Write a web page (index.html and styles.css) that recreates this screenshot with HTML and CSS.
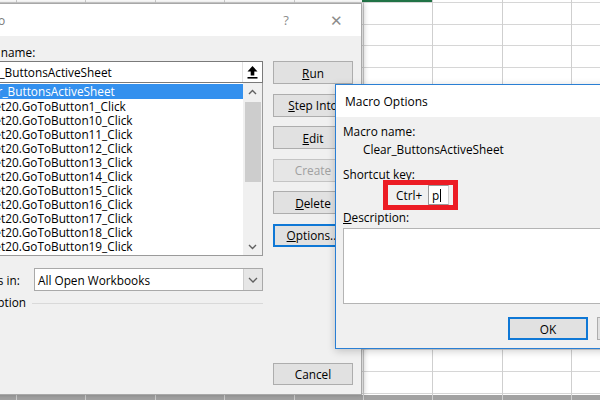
FILE: index.html
```html
<!DOCTYPE html>
<html>
<head>
<meta charset="utf-8">
<link rel="stylesheet" href="styles.css">
</head>
<body>
<div class="desktop">
  <div class="dlg macro">
    <div class="titlebar">
      <span class="title">Macro</span>
      <span class="cap help">?</span>
      <span class="cap close">&#x2715;</span>
    </div>
    <div class="mbody">
      <div class="leftcol">
        <div class="lbl"><u>M</u>acro name:</div>
        <div class="namebox">
          <span class="nametext">Clear_ButtonsActiveSheet</span>
          <span class="refbtn"><svg width="11" height="14" viewBox="0 0 11 14"><path d="M5.5 1 L10.5 6.5 H7.3 V10.5 H3.7 V6.5 H0.5 Z" fill="#000"/><rect x="0.5" y="12" width="10" height="1.6" fill="#000"/></svg></span>
        </div>
        <div class="list">
          <ul class="items">
            <li class="sel">Clear_ButtonsActiveSheet</li>
            <li>Sheet20.GoToButton1_Click</li>
            <li>Sheet20.GoToButton10_Click</li>
            <li>Sheet20.GoToButton11_Click</li>
            <li>Sheet20.GoToButton12_Click</li>
            <li>Sheet20.GoToButton13_Click</li>
            <li>Sheet20.GoToButton14_Click</li>
            <li>Sheet20.GoToButton15_Click</li>
            <li>Sheet20.GoToButton16_Click</li>
            <li>Sheet20.GoToButton17_Click</li>
            <li>Sheet20.GoToButton18_Click</li>
            <li>Sheet20.GoToButton19_Click</li>
          </ul>
          <div class="vscroll">
            <span class="sarrow"><svg width="9" height="6" viewBox="0 0 9 6"><path d="M1 5 L4.5 1.5 L8 5" fill="none" stroke="#606060" stroke-width="1.4"/></svg></span>
            <span class="thumb"></span>
            <span class="spacer"></span>
            <span class="sarrow"><svg width="9" height="6" viewBox="0 0 9 6"><path d="M1 1 L4.5 4.5 L8 1" fill="none" stroke="#606060" stroke-width="1.4"/></svg></span>
          </div>
        </div>
        <div class="inrow">
          <span class="lbl">M<u>a</u>cros in:</span>
          <div class="select">
            <span class="seltext">All Open Workbooks</span>
            <span class="dd"><svg width="10" height="6" viewBox="0 0 10 6"><path d="M1 1 L5 5 L9 1" fill="none" stroke="#606060" stroke-width="1.3"/></svg></span>
          </div>
        </div>
        <div class="group">
          <span class="lbl">Description</span>
          <span class="gline"></span>
        </div>
      </div>
      <div class="btncol">
        <button class="btn"><u>R</u>un</button>
        <button class="btn"><u>S</u>tep Into</button>
        <button class="btn"><u>E</u>dit</button>
        <button class="btn disabled">Create</button>
        <button class="btn"><u>D</u>elete</button>
        <button class="btn focus"><u>O</u>ptions...</button>
        <button class="btn cancel">Cancel</button>
      </div>
    </div>
  </div>

  <div class="dlg opts">
    <div class="titlebar">
      <span class="title active">Macro Options</span>
    </div>
    <div class="obody">
      <div class="lbl">Macro name:</div>
      <div class="macroname">Clear_ButtonsActiveSheet</div>
      <div class="lbl skey">Shortcut <u>k</u>ey:</div>
      <div class="redbox">
        <span class="ctrl">Ctrl+</span>
        <span class="keybox">p<span class="caret"></span></span>
      </div>
      <div class="lbl desc"><u>D</u>escription:</div>
      <div class="textarea"></div>
      <div class="obtns">
        <button class="btn focus ok">OK</button>
        <button class="btn">Cancel</button>
      </div>
    </div>
  </div>
</div>
</body>
</html>
```

FILE: styles.css
```css
html, body {
  margin: 0;
  padding: 0;
}
body {
  width: 600px;
  height: 400px;
  overflow: hidden;
  font-family: "Open Sans", "Noto Sans", sans-serif;
  font-size: 11.8px;
  color: #000;
}
.desktop {
  position: relative;
  width: 600px;
  height: 400px;
  overflow: hidden;
  background:
    linear-gradient(#217346, #217346) 362px 0 / 70px 2px no-repeat,
    repeating-linear-gradient(90deg, #cfcfcf 0 1px, transparent 1px 69.4px) 16px 0 / 600px 400px repeat-x,
    linear-gradient(#a2a2a2, #a2a2a2) 0 395px / 600px 5px no-repeat,
    repeating-linear-gradient(180deg, #d6d6d6 0 1px, transparent 1px 21.7px) 0 2px / 600px 400px repeat-y,
    #ffffff;
}
u { text-decoration: underline; text-underline-offset: 1px; }

.dlg {
  position: absolute;
  box-sizing: border-box;
  background: #f0f0f0;
  display: flex;
  flex-direction: column;
}
.macro {
  left: -45px;
  top: 3px;
  width: 407px;
  height: 392px;
  border: 1px solid #a8a8a8;
  box-shadow: 2px 0 5px rgba(0,0,0,0.22);
}
.opts {
  left: 335px;
  top: 84px;
  width: 300px;
  height: 265px;
  border: 1px solid #2a7fd4;
  box-shadow: 0 2px 8px rgba(0,0,0,0.2);
}
.titlebar {
  background: #fff;
  height: 32px;
  display: flex;
  align-items: center;
  flex-shrink: 0;
}
.title {
  color: #7a7a7a;
  padding-left: 14px;
  flex: 1;
  font-size: 12px;
}
.title.active {
  color: #000;
  padding-left: 9px;
}
.cap {
  width: 50px;
  text-align: center;
  color: #8c8c8c;
}
.help { font-size: 13px; }
.close { font-size: 15px; }

.mbody {
  flex: 1;
  display: flex;
  gap: 10px;
  padding: 8px 8px 9px 11px;
}
.leftcol {
  width: 296px;
  display: flex;
  flex-direction: column;
}
.lbl {
  line-height: 16px;
  height: 17px;
  margin-left: -4px;
  white-space: nowrap;
}
.namebox {
  height: 22px;
  box-sizing: border-box;
  border: 1px solid #7a7a7a;
  background: #fff;
  display: flex;
  align-items: center;
}
.nametext {
  flex: 1;
  padding-left: 3px;
}
.refbtn {
  width: 19px;
  height: 20px;
  display: flex;
  align-items: center;
  justify-content: center;
  border-left: 1px solid #e2e2e2;
}
.list {
  height: 173px;
  box-sizing: border-box;
  border: 1px solid #9a9a9a;
  border-top: none;
  background: #fff;
  display: flex;
}
.items {
  list-style: none;
  margin: 0;
  padding: 1px 0 0 0;
  flex: 1;
}
.items li {
  height: 14px;
  line-height: 14px;
  padding-left: 6px;
  white-space: nowrap;
}
.items li.sel {
  background: #3390ee;
  color: #fff;
  height: 15px;
  line-height: 15px;
}
.vscroll {
  width: 19px;
  background: #f0f0f0;
  display: flex;
  flex-direction: column;
  align-items: center;
}
.sarrow {
  height: 17px;
  width: 19px;
  display: flex;
  align-items: center;
  justify-content: center;
}
.thumb {
  margin-top: 2px;
  width: 16px;
  height: 80px;
  background: #cdcdcd;
}
.spacer { flex: 1; }

.inrow {
  margin-top: 12px;
  display: flex;
  align-items: center;
  justify-content: space-between;
}
.inrow .lbl { height: 16px; }
.select {
  width: 229px;
  height: 23px;
  box-sizing: border-box;
  border: 1px solid #a9a9a9;
  background: #fff;
  display: flex;
  align-items: center;
}
.seltext {
  flex: 1;
  padding-left: 3px;
}
.dd {
  width: 18px;
  height: 21px;
  background: #e6e6e6;
  border-left: 1px solid #cfcfcf;
  display: flex;
  align-items: center;
  justify-content: center;
}
.group {
  margin-top: 3px;
  display: flex;
  align-items: center;
  gap: 6px;
}
.gline {
  flex: 1;
  border-top: 1px solid #d9d9d9;
  margin-top: 1px;
}

.btncol {
  width: 80px;
  display: flex;
  flex-direction: column;
  padding-top: 17px;
}
.btn {
  font: inherit;
  color: #000;
  height: 23px;
  width: 80px;
  flex-shrink: 0;
  box-sizing: border-box;
  background: #e1e1e1;
  border: 1px solid #adadad;
  padding: 0;
  margin: 0 0 9.6px 0;
  text-align: center;
  white-space: nowrap;
  overflow: hidden;
}
.btn.disabled { color: #a0a0a0; border-color: #c4c4c4; background: #e6e6e6; }
.btn.focus {
  border-color: #0f78d6;
  box-shadow: inset 0 0 0 1px #0f78d6;
}
.btn.cancel { margin: auto 0 0 0; height: 22px; }

.obody {
  flex: 1;
  padding: 6px 0 0 7px;
  display: flex;
  flex-direction: column;
}
.obody .lbl { margin-left: 0; height: 16px; }
.macroname {
  margin-top: 2px;
  margin-left: 20px;
  line-height: 16px;
}
.obody .lbl.skey { margin-top: 9px; }
.redbox {
  margin-top: -2px;
  margin-left: 40px;
  width: 75px;
  height: 30px;
  box-sizing: border-box;
  border: 5px solid #ec1c24;
  display: flex;
  align-items: center;
  padding-left: 8px;
}
.ctrl { width: 32px; }
.keybox {
  width: 21px;
  height: 20px;
  box-sizing: border-box;
  border: 1px solid #9a9a9a;
  border-right-color: #d0d0d0;
  background: #fff;
  display: flex;
  align-items: center;
  padding-left: 3px;
}
.caret {
  width: 1px;
  height: 13px;
  background: #000;
  margin-left: 1px;
}
.obody .lbl.desc { margin-top: -1px; }
.textarea {
  margin-top: 3px;
  height: 76px;
  width: 280px;
  flex-shrink: 0;
  box-sizing: border-box;
  border: 1px solid #b4b4b4;
  background: #fff;
}
.obtns {
  margin-top: 13px;
  margin-left: 165px;
  display: flex;
  gap: 9px;
}
.obtns .btn { margin: 0; }
```
